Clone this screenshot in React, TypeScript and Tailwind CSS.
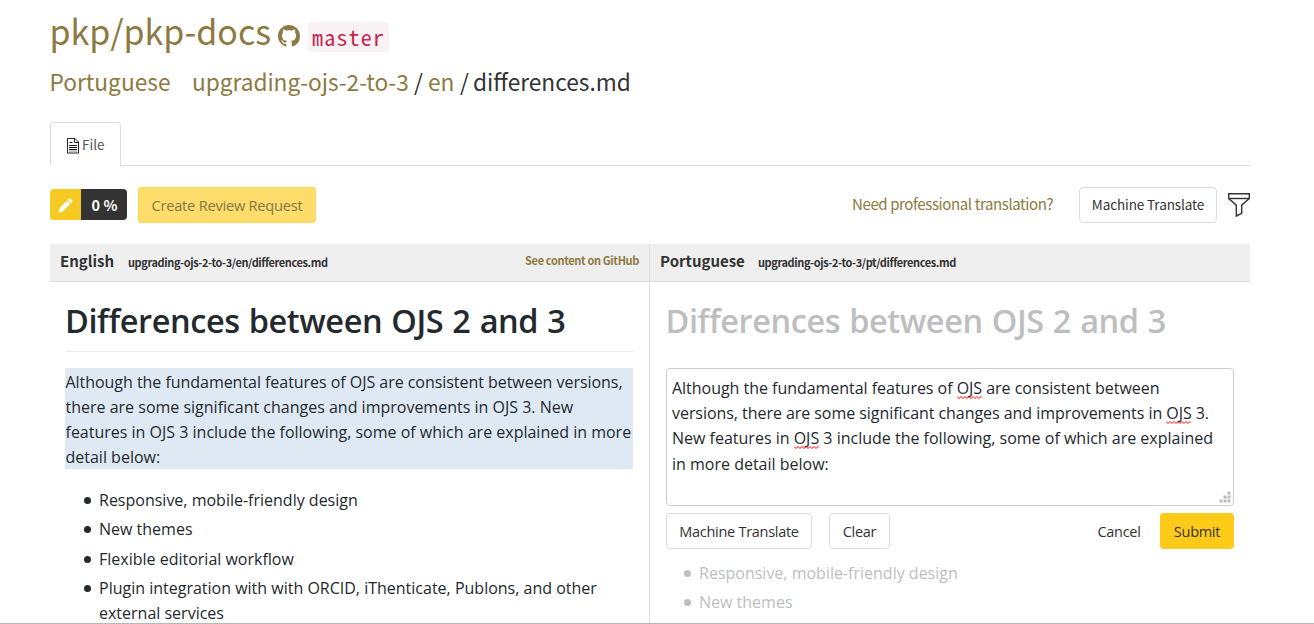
import type { ReactNode } from "react";

const SOURCE = "font-['Noto_Sans_CJK_SC','Noto_Sans',sans-serif]";
const UI = "font-['Open_Sans','Noto_Sans',sans-serif]";

function GithubMark() {
  return (
    <svg viewBox="0 0 16 16" className="h-[22px] w-[22px]" fill="#8c7a42">
      <path d="M8 0C3.58 0 0 3.58 0 8c0 3.54 2.29 6.53 5.47 7.59.4.07.55-.17.55-.38 0-.19-.01-.82-.01-1.49-2.01.37-2.53-.49-2.69-.94-.09-.23-.48-.94-.82-1.13-.28-.15-.68-.52-.01-.53.63-.01 1.08.58 1.23.82.72 1.21 1.87.87 2.33.66.07-.52.28-.87.51-1.07-1.78-.2-3.64-.89-3.64-3.95 0-.87.31-1.59.82-2.15-.08-.2-.36-1.02.08-2.12 0 0 .67-.21 2.2.82.64-.18 1.32-.27 2-.27s1.36.09 2 .27c1.53-1.04 2.2-.82 2.2-.82.44 1.1.16 1.92.08 2.12.51.56.82 1.27.82 2.15 0 3.07-1.87 3.75-3.65 3.95.29.25.54.73.54 1.48 0 1.07-.01 1.93-.01 2.2 0 .21.15.46.55.38A8.01 8.01 0 0 0 16 8c0-4.42-3.58-8-8-8" />
    </svg>
  );
}

function FileIcon() {
  return (
    <svg viewBox="0 0 12 16" className="h-4 w-3" fill="none" stroke="#222">
      <path d="M.5 .5h7.500l3.500 3.500v11H.5z" />
      <path d="M7.500 .8v3.700h3.700M2.500 4.500h3M2 7.500h8M2 9.500h8M2 11.500h8" />
      <path d="M2 13h8" stroke="#888" />
    </svg>
  );
}

function FilterIcon() {
  return (
    <svg viewBox="0 0 24 26" className="h-[26px] w-6" fill="none" stroke="#333" strokeWidth="1.4">
      <path d="M1.700 1.700h20.600v4.800l-7.600 6.600v8.200l-5.400 2.700V13.100L1.700 6.500z" />
      <path d="M1.700 6.500h20.600" />
    </svg>
  );
}

function Pencil() {
  return (
    <svg viewBox="0 0 16 16" className="h-[15px] w-[15px]" fill="white">
      <path d="M.6 15.400l1-4.400 8.100-8.100 3.400 3.400-8.100 8.100zM10.500 2.100l1.200-1.200c.5-.5 1.100-.5 1.600 0l1.800 1.800c.5.5.5 1.100 0 1.600l-1.200 1.200z" />
      <path d="M2 12.200l1.800 1.800" stroke="#f5cb23" strokeWidth=".6" />
    </svg>
  );
}

function Grip() {
  return (
    <svg viewBox="0 0 12 12" className="absolute right-[2px] bottom-[2px] h-3 w-3" fill="#bbb">
      <path d="M8.500 .5h3v3h-3zM8.500 4.500h3v3h-3zM8.500 8.500h3v3h-3zM4.500 4.500h3v3h-3zM4.500 8.500h3v3h-3zM.5 8.500h3v3h-3z" />
    </svg>
  );
}

function Misspelt() {
  return (
    <span className="relative">
      OJS
      <svg className="absolute top-[19px] left-0 h-[3px] w-[27px]" viewBox="0 0 27 3" fill="none" stroke="#f00">
        <path d="M0 .5l2 2 2-2 2 2 2-2 2 2 2-2 2 2 2-2 2 2 2-2 2 2 2-2 1 1" />
      </svg>
    </span>
  );
}

function Bullet({ children }: { children: ReactNode }) {
  return (
    <li className="flex">
      <span className="mt-[9px] mr-[8.5px] h-[7px] w-[7px] shrink-0 rounded-full bg-current" />
      <div className="whitespace-nowrap">{children}</div>
    </li>
  );
}

export default function App() {
  return (
    <div className={`h-[624px] w-[1314px] overflow-hidden border-b border-[#b8b8b8] bg-white px-[50px] text-[#24292e] ${UI}`}>
      <header className={SOURCE}>
        <div className="flex h-[64px] whitespace-nowrap text-[#8c7a42]">
          <h1 className="-ml-[0.5px] w-[228.5px] text-[34px] leading-[62px] tracking-[-0.05px]">pkp/pkp-docs</h1>
          <div className="mt-[25px] w-[30px]">
            <GithubMark />
          </div>
          <code className="mt-[22px] h-[30px] w-[81px] rounded-[4px] bg-[#f9f2f4] pl-1 font-['Noto_Sans_Mono_CJK_SC','Liberation_Mono',monospace] text-[22px] leading-[29px] tracking-[1.2px] text-[#c7254e]">
            master
          </code>
        </div>
        <div className="-mt-px flex h-[39px] text-[22.7px] leading-[38px] whitespace-nowrap text-[#8c7a42]">
          <span className="-ml-[0.5px] w-[142.5px]">Portuguese</span>
          <span className="w-[222px] tracking-[-0.04px]">upgrading-ojs-2-to-3</span>
          <span className="w-[14px] text-[#333]">/</span>
          <span className="w-[32px]">en</span>
          <span className="w-[13px] text-[#333]">/</span>
          <span className="text-[#333]">differences.md</span>
        </div>
      </header>

      <nav className="mt-5 flex w-[1200px]">
        <div className="flex h-[44px] w-[71px] rounded-t-[4px] border border-b-0 border-[#ddd] pt-[15px] pl-4">
          <FileIcon />
          <span className={`ml-[3px] text-[13.5px] leading-[12px] text-[#555] ${SOURCE}`}>File</span>
        </div>
        <div className="flex-1 border-b border-[#ddd]" />
      </nav>

      <div className="mt-[21px] flex h-[36px] w-[1200px] whitespace-nowrap">
        <div className="mt-[2px] flex h-[31px] w-[77px] overflow-hidden rounded-[4px]">
          <div className="flex w-[31px] items-center justify-center bg-[#f5cb23] pt-px pr-px">
            <Pencil />
          </div>
          <div className={`flex-1 bg-[#333] pl-px text-center text-[14.5px] leading-[31px] font-bold text-white ${SOURCE}`}>0 %</div>
        </div>
        <button className="ml-[11px] h-[36px] w-[178px] rounded-[3px] border border-[#ffd754] bg-[#ffdd6b] pt-px text-[14.6px] tracking-[-0.22px] text-[#817648]">
          Create Review Request
        </button>
        <span className={`ml-auto w-[227px] text-[15px] leading-[34px] tracking-[-0.39px] text-[#8c7a42] ${SOURCE}`}>
          Need professional translation?
        </span>
        <button className={`h-[36px] w-[138px] rounded-[4px] border border-[#ddd] pb-[2px] text-[13.5px] leading-[32px] tracking-[-0.1px] text-[#333] ${SOURCE}`}>
          Machine Translate
        </button>
        <div className="mt-[5px] -mr-px ml-[10px]">
          <FilterIcon />
        </div>
      </div>

      <main className="mt-[21px] grid w-[1200px] grid-cols-[600px_600px]">
        <section className="h-[380px] border-r border-[#ddd]">
          <div className={`flex h-[38px] border-b border-[#ddd] bg-[#efefef] pr-[10px] pl-[10px] font-bold whitespace-nowrap text-[#333] ${SOURCE}`}>
            <h2 className="w-[68px] text-[15px] leading-[33px]">English</h2>
            <span className="text-[11px] leading-[37px] tracking-[-0.4px]">upgrading-ojs-2-to-3/en/differences.md</span>
            <span className="ml-auto text-[11px] leading-[33px] tracking-[-0.35px] text-[#8c7a42]">See content on GitHub</span>
          </div>
          <div className="pr-4 pl-[15px]">
            <h1 className="mt-[16px] h-[54px] border-b border-[#eaecef] text-[32.5px] leading-[46px] font-semibold tracking-[-0.42px] whitespace-nowrap [word-spacing:1.1px]">
              Differences between OJS 2 and 3
            </h1>
            <p className="mt-4 h-[101px] bg-[#dfe9f4] pt-[1.5px] pl-[0.5px] text-[16px] leading-[25.3px] whitespace-nowrap">
              <span className="block tracking-[-0.04px]">Although the fundamental features of OJS are consistent between versions,</span>
              <span className="block">there are some significant changes and improvements in OJS 3. New</span>
              <span className="block">features in OJS 3 include the following, some of which are explained in more</span>
              <span className="block">detail below:</span>
            </p>
            <ul className="mt-[19px] flex flex-col gap-1 pl-[18.5px] text-[16px] leading-[25.3px]">
              <Bullet>Responsive, mobile-friendly design</Bullet>
              <Bullet>New themes</Bullet>
              <Bullet>Flexible editorial workflow</Bullet>
              <Bullet>
                <span className="block">Plugin integration with with ORCID, iThenticate, Publons, and other</span>
                <span className="-mt-[0.5px] block">external services</span>
              </Bullet>
            </ul>
          </div>
        </section>

        <section className="h-[380px]">
          <div className={`flex h-[38px] border-b border-[#ddd] bg-[#efefef] pl-[10px] font-bold whitespace-nowrap text-[#333] ${SOURCE}`}>
            <h2 className="w-[98px] text-[15px] leading-[33px]">Portuguese</h2>
            <span className="text-[11px] leading-[37px] tracking-[-0.4px]">upgrading-ojs-2-to-3/pt/differences.md</span>
          </div>
          <div className="px-4">
            <h1 className="mt-[16px] -ml-[0.5px] h-[54px] text-[32.5px] leading-[46px] font-semibold tracking-[-0.42px] whitespace-nowrap text-[#bdbebf] [word-spacing:1.1px]">
              Differences between OJS 2 and 3
            </h1>
            <div className="relative mt-4 h-[138px] w-[568px] rounded-[4px] border border-[#ccc] pt-[6.5px] pl-[5px] text-[16px] leading-[25.4px] whitespace-nowrap">
              <span className="block tracking-[-0.03px]">Although the fundamental features of <Misspelt /> are consistent between</span>
              <span className="block tracking-[-0.05px]">versions, there are some significant changes and improvements in <Misspelt /> 3.</span>
              <span className="block">New features in <Misspelt /> 3 include the following, some of which are explained</span>
              <span className="block">in more detail below:</span>
              <Grip />
            </div>
            <div className="mt-[7px] flex h-[36px] w-[568px] text-[14.5px] tracking-[-0.28px] text-[#333]">
              <button className="w-[146px] rounded-[4px] border border-[#ddd] pt-px">Machine Translate</button>
              <button className="ml-[17px] w-[61px] rounded-[4px] border border-[#ddd] pt-px">Clear</button>
              <button className="ml-auto w-[70px] pt-px">Cancel</button>
              <button className="ml-[6px] w-[74px] rounded-[4px] bg-[#ffca18] pt-px">Submit</button>
            </div>
            <ul className="mt-[12px] flex flex-col gap-1 pl-[17.5px] text-[16px] leading-[25.4px] text-[#bdbebf]">
              <Bullet>Responsive, mobile-friendly design</Bullet>
              <Bullet>New themes</Bullet>
            </ul>
          </div>
        </section>
      </main>
    </div>
  );
}
